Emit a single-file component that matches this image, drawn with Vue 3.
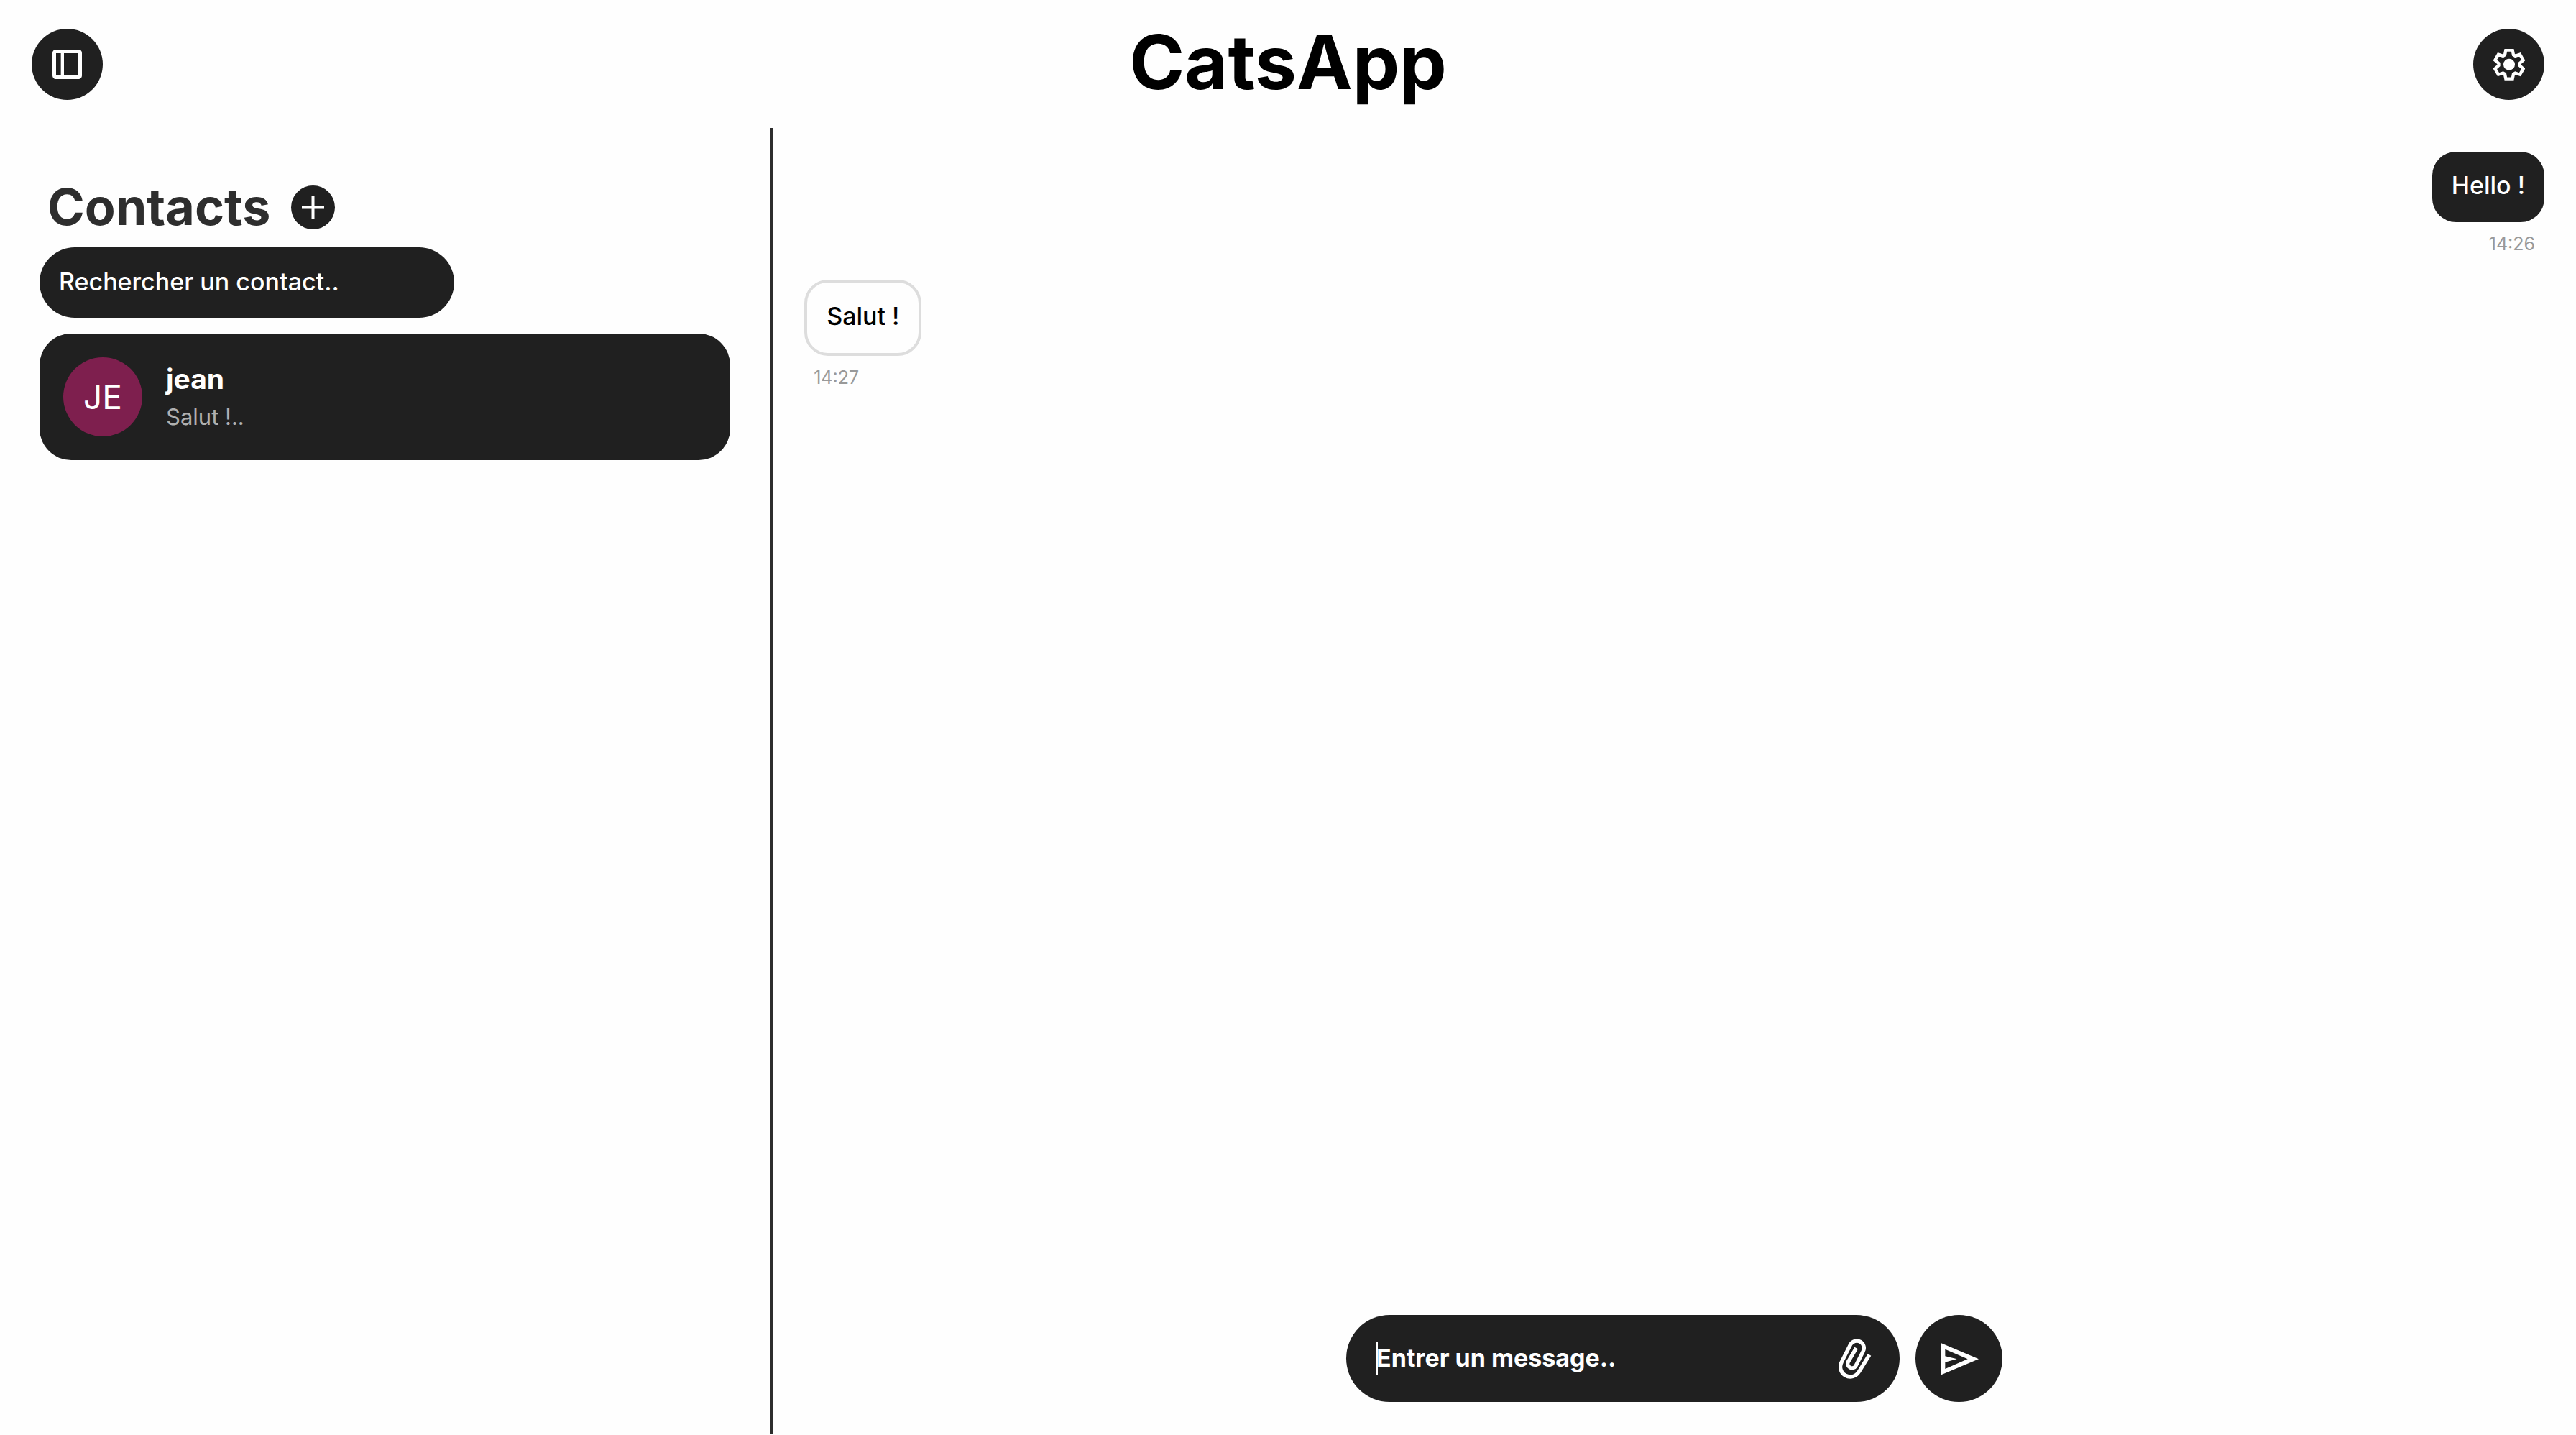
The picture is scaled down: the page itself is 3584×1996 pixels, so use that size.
<script setup>
import { ref } from 'vue'

const search = ref('')
const draft = ref('')

const contacts = [{ id: 1, initials: 'JE', name: 'jean', preview: 'Salut !..' }]

const messages = [
  { id: 1, text: 'Hello !', time: '14:26', mine: true },
  { id: 2, text: 'Salut !', time: '14:27', mine: false },
]

// Outline of the settings gear: one tooth repeated every 60 degrees.
const tooth = [[-18, -40], [-14, -60], [14, -60], [18, -40]]
const gear = Array.from({ length: 6 }, (_, k) => {
  const a = (k * Math.PI) / 3
  return tooth.map(([x, y]) =>
    `${(x * Math.cos(a) - y * Math.sin(a)).toFixed(1)},${(x * Math.sin(a) + y * Math.cos(a)).toFixed(1)}`
  ).join(' ')
}).join(' ')
</script>

<template>
  <div class="app">
    <header class="topbar">
      <button class="round" type="button" aria-label="Afficher les contacts">
        <svg width="41" height="41" viewBox="0 0 123 123" fill="#fff" fill-rule="evenodd">
          <path d="M14 0H109A14 14 0 0 1 123 14V109A14 14 0 0 1 109 123H14A14 14 0 0 1 0 109V14A14 14 0 0 1 14 0ZM15 15V108H35V15ZM48 15V108H108V15Z" />
        </svg>
      </button>
      <h1 class="brand">CatsApp</h1>
      <button class="round end" type="button" aria-label="Paramètres">
        <svg width="44" height="44" viewBox="-66 -65 132 132">
          <polygon :points="gear" fill="none" stroke="#fff" stroke-width="13" />
          <circle r="24" fill="#fff" />
        </svg>
      </button>
    </header>

    <div class="body">
      <aside class="sidebar">
        <div class="heading">
          <h2>Contacts</h2>
          <button class="add" type="button" aria-label="Ajouter un contact">
            <svg width="31" height="31" viewBox="0 0 31 31" stroke="#fff" stroke-width="4">
              <path d="M0 15.5H31M15.5 0V31" />
            </svg>
          </button>
        </div>
        <input v-model="search" class="search" type="text" aria-label="Rechercher un contact" placeholder="Rechercher un contact..">
        <ul class="contacts">
          <li v-for="c in contacts" :key="c.id">
            <button class="contact" type="button">
              <span class="avatar">{{ c.initials }}</span>
              <span class="info">
                <span class="name">{{ c.name }}</span>
                <span class="preview">{{ c.preview }}</span>
              </span>
            </button>
          </li>
        </ul>
      </aside>

      <main class="chat">
        <ul class="messages">
          <li v-for="m in messages" :key="m.id" class="message" :class="{ mine: m.mine }">
            <p class="bubble">{{ m.text }}</p>
            <time class="time">{{ m.time }}</time>
          </li>
        </ul>
        <form class="composer" @submit.prevent>
          <div class="field">
            <span class="caret" aria-hidden="true"></span>
            <input v-model="draft" class="draft" type="text" aria-label="Entrer un message" placeholder="Entrer un message..">
            <button class="attach" type="button" aria-label="Joindre un fichier">
              <svg width="46" height="56" viewBox="24 17 138 168" fill="none" stroke="#fff" stroke-width="16">
                <path d="M153 84L109 155A41 41 0 0 1 37 114L74 41A30 30 0 0 1 126 71L95 132A18 18 0 0 1 64 114L98 56" />
              </svg>
            </button>
          </div>
          <button class="send" type="submit" aria-label="Envoyer">
            <svg width="54" height="54" viewBox="596 188 162 162" fill="#fff" fill-rule="evenodd">
              <path d="M602 204L758 270L602 336ZM618 229V258L667 270L618 283V311L712 270Z" />
            </svg>
          </button>
        </form>
      </main>
    </div>
  </div>
</template>

<style>
body {
  background: #fefefe;
}
</style>

<style scoped>
.app {
  display: flex;
  flex-direction: column;
  box-sizing: border-box;
  min-height: 100vh;
  padding-bottom: 2px;
  color: #000;
  font-family: Inter, "Liberation Sans", sans-serif;
}

.app * {
  box-sizing: border-box;
}

h1,
h2,
p,
ul {
  margin: 0;
  padding: 0;
  list-style: none;
}

button,
input {
  margin: 0;
  padding: 0;
  border: 0;
  outline: 0;
  background: none;
  color: #fff;
  font-family: inherit;
}

button {
  display: flex;
  align-items: center;
  justify-content: center;
  flex: none;
  cursor: pointer;
}

input::placeholder {
  color: #fff;
  opacity: 1;
}

.topbar {
  display: grid;
  grid-template-columns: 1fr auto 1fr;
  align-items: center;
  padding: 40px 44px 39px;
}

.round {
  width: 99px;
  height: 99px;
  border-radius: 50%;
  background: #202020;
}

.end {
  justify-self: end;
}

.brand {
  padding-bottom: 8px;
  font-size: 104px;
  font-weight: 700;
  line-height: 90px;
}

.body {
  display: flex;
  flex: 1;
}

.sidebar {
  width: 30%;
  padding: 68px 55px 44px;
  border-right: 4px solid #2d2d2d;
}

.heading {
  display: flex;
  align-items: center;
  gap: 27px;
  padding-left: 11px;
}

.heading h2 {
  color: #2e2e2e;
  font-size: 70px;
  font-weight: 700;
  line-height: 84px;
}

.add {
  width: 61px;
  height: 61px;
  margin-left: 2px;
  border-radius: 50%;
  background: #202020;
}

.search {
  display: block;
  width: 60%;
  height: 98px;
  margin: 14px 0 22px;
  padding: 0 27px 4px;
  border-radius: 49px;
  background: #202020;
  font-size: 34px;
  font-weight: 500;
}

.contact {
  width: 100%;
  justify-content: flex-start;
  gap: 33px;
  padding: 33px;
  border-radius: 44px;
  background: #202020;
  text-align: left;
}

.avatar {
  display: flex;
  align-items: center;
  justify-content: center;
  width: 110px;
  height: 110px;
  border-radius: 50%;
  background: #7e1f4e;
  font-size: 46px;
}

.info {
  display: flex;
  flex-direction: column;
}

.name {
  font-size: 39px;
  font-weight: 700;
  line-height: 56px;
}

.preview {
  color: #b0b0b0;
  font-size: 31px;
  line-height: 50px;
}

.chat {
  display: flex;
  flex: 1;
  flex-direction: column;
  justify-content: space-between;
  padding: 33px 44px 44px;
}

.messages {
  display: flex;
  flex-direction: column;
  gap: 35px;
}

.message {
  display: flex;
  flex-direction: column;
  align-items: flex-start;
  gap: 15px;
}

.mine {
  align-items: flex-end;
}

.bubble {
  padding: 22px 27px 26px;
  border: 4px solid #ddd;
  border-radius: 33px;
  font-size: 34px;
  font-weight: 500;
  line-height: 50px;
}

.mine .bubble {
  border: 0;
  background: #202020;
  color: #fff;
}

.time {
  padding: 0 13px;
  color: #999;
  font-size: 25px;
  line-height: 30px;
}

.composer {
  display: flex;
  justify-content: center;
  gap: 22px;
}

.field {
  position: relative;
  display: flex;
  align-items: center;
  width: 770px;
  height: 121px;
  padding: 0 39px 0 42px;
  border-radius: 61px;
  background: #202020;
}

.caret {
  position: absolute;
  left: 42px;
  width: 2px;
  height: 45px;
  background: #fff;
}

.draft {
  flex: 1;
  min-width: 0;
  height: 100%;
  padding-bottom: 2px;
  font-size: 34px;
  font-weight: 700;
  caret-color: transparent;
}

.send {
  width: 121px;
  height: 121px;
  border-radius: 50%;
  background: #202020;
}
</style>
